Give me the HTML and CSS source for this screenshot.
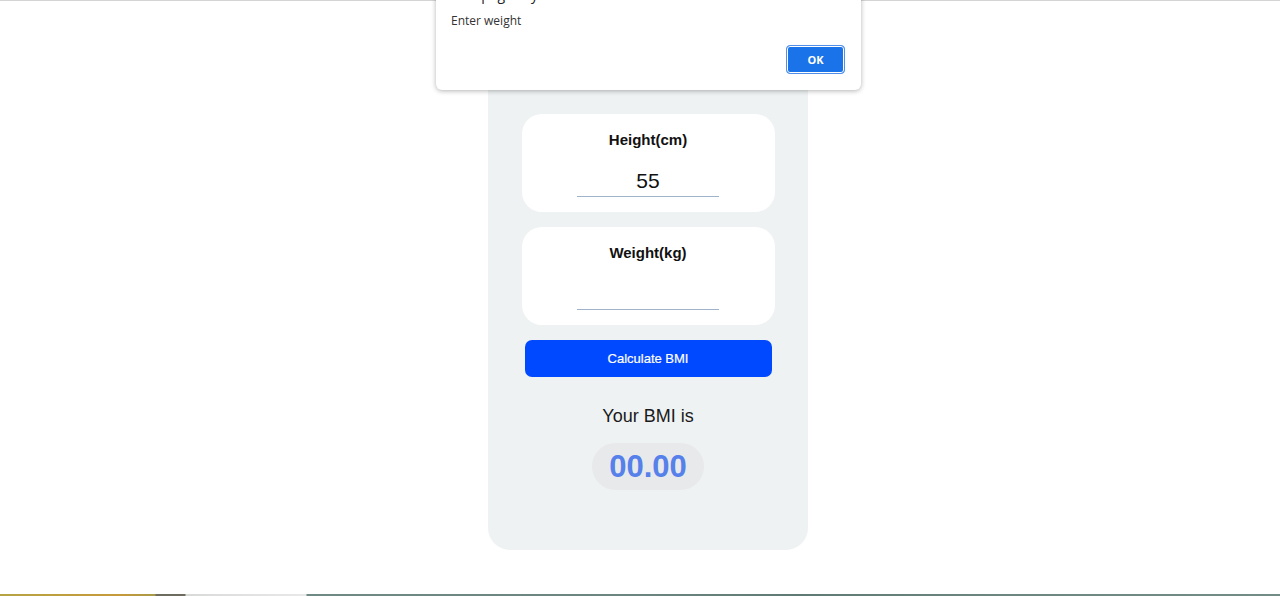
FILE: index.html
```html
<!DOCTYPE html>
<html lang="en">
<head>
<meta charset="utf-8">
<title>BMI Calculator</title>
<link rel="stylesheet" href="styles.css">
</head>
<body>
<div class="page">
  <div class="topline"></div>
  <main class="main">
    <div class="card">
      <div class="field">
        <label class="field-label" for="h">Height(cm)</label>
        <input class="field-input" id="h" type="text" value="55">
      </div>
      <div class="field">
        <label class="field-label" for="w">Weight(kg)</label>
        <input class="field-input" id="w" type="text" value="">
      </div>
      <button class="calc-btn">Calculate BMI</button>
      <p class="result-label">Your BMI is</p>
      <div class="result-pill">00.00</div>
    </div>
  </main>
  <div class="taskbar"></div>
</div>
<div class="dialog">
  <div class="dialog-title">This page says</div>
  <div class="dialog-msg">Enter weight</div>
  <div class="dialog-actions"><button class="dialog-ok">OK</button></div>
</div>
</body>
</html>
```
FILE: styles.css
```css
* { box-sizing: border-box; }
html, body { margin: 0; padding: 0; }
body {
  width: 1280px;
  height: 596px;
  overflow: hidden;
  background: #fff;
  font-family: "Liberation Sans", Arial, sans-serif;
  color: #111;
  position: relative;
}
.page {
  height: 596px;
  display: flex;
  flex-direction: column;
}
.topline {
  height: 1px;
  background: #d4d4d4;
}
.main {
  flex: 1;
  display: flex;
  justify-content: center;
  align-items: flex-start;
  padding-left: 16px;
}
.card {
  margin-top: 29px;
  width: 320px;
  background: #eef2f3;
  border-radius: 22px;
  padding: 84px 0 60px;
  display: flex;
  flex-direction: column;
  align-items: center;
}
.field {
  width: 253px;
  height: 98px;
  background: #fff;
  border-radius: 20px;
  padding-top: 16px;
  display: flex;
  flex-direction: column;
  align-items: center;
  margin-bottom: 15px;
}
.field-label {
  font-size: 15px;
  font-weight: bold;
  line-height: 20px;
  color: #111;
}
.field-input {
  margin-top: 16px;
  width: 142px;
  height: 31px;
  border: none;
  border-bottom: 1px solid #9fb4c9;
  outline: none;
  background: transparent;
  text-align: center;
  font-family: "Liberation Sans", Arial, sans-serif;
  font-size: 21px;
  color: #111;
  padding: 0;
}
.calc-btn {
  width: 247px;
  height: 37px;
  border: none;
  border-radius: 7px;
  background: #0049ff;
  color: #fff;
  font-family: "Liberation Sans", Arial, sans-serif;
  font-size: 13px;
  padding: 0;
  -webkit-text-stroke: 0.2px #fff;
}
.result-label {
  margin: 27px 0 0;
  font-size: 18px;
  line-height: 24px;
  color: #1a1a1a;
}
.result-pill {
  margin-top: 15px;
  width: 112px;
  height: 47px;
  border-radius: 24px;
  background: #e7e9ea;
  color: #5680ea;
  font-size: 31px;
  font-weight: bold;
  line-height: 47px;
  text-align: center;
}
.taskbar {
  height: 2px;
  background: linear-gradient(to right,
    #b6a443 0, #c79a3a 120px, #a89a48 155px,
    #6e6c5e 156px, #6e6c5e 185px,
    #d8dad8 186px, #e8e8e8 306px,
    #6f8985 307px, #6c8580 640px,
    #5f7a74 800px, #6d8780 1000px, #748c86 1280px);
}
.dialog {
  position: absolute;
  left: 436px;
  top: -14px;
  width: 425px;
  background: #fff;
  border-radius: 0 0 6px 6px;
  box-shadow: 0 1px 5px rgba(0,0,0,0.3);
  padding: 0 16px 16px 15px;
  font-family: "Open Sans", "Noto Sans", sans-serif;
}
.dialog-title {
  font-size: 14px;
  line-height: 18px;
  color: #202124;
}
.dialog-msg {
  margin-top: 9px;
  font-size: 12px;
  line-height: 16px;
  color: #333;
}
.dialog-actions {
  margin-top: 16px;
  display: flex;
  justify-content: flex-end;
}
.dialog-ok {
  width: 59px;
  height: 29px;
  border: 1px solid #4f8fe8;
  border-radius: 4px;
  box-shadow: inset 0 0 0 1px #fff;
  background: #1a73e8;
  color: #fff;
  font-family: "Open Sans", "Noto Sans", sans-serif;
  font-size: 11px;
  font-weight: bold;
  padding: 0;
}
```
